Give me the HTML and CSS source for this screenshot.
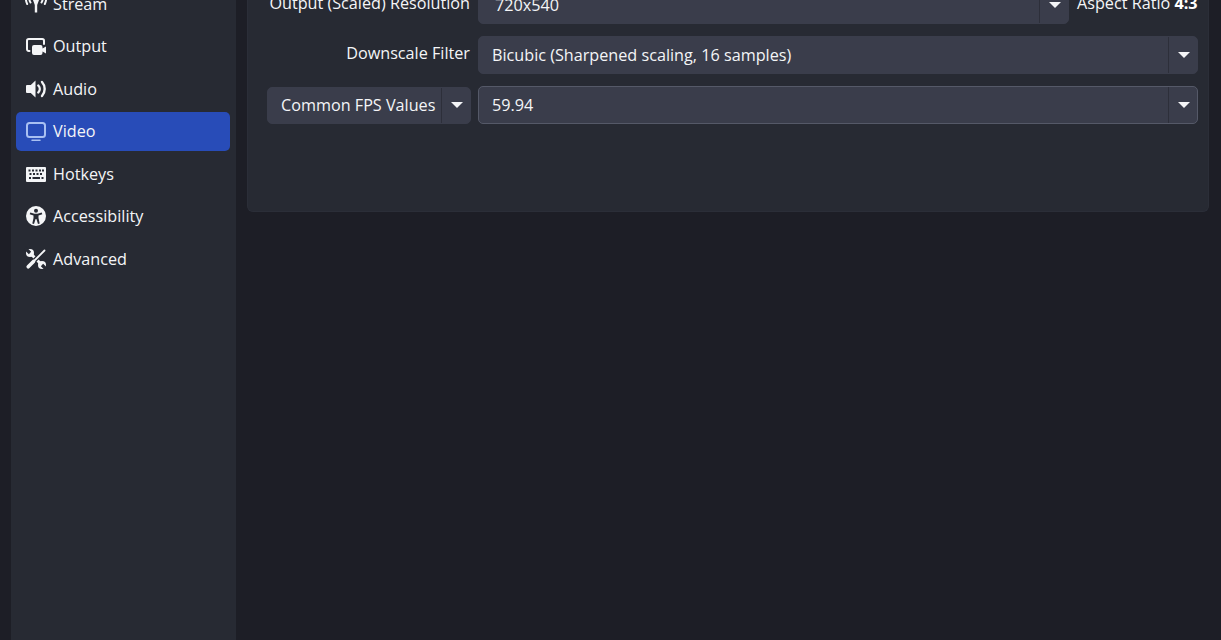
FILE: index.html
```html
<!DOCTYPE html>
<html lang="en">
<head>
<meta charset="utf-8">
<title>Settings</title>
<link rel="stylesheet" href="styles.css">
</head>
<body>
<div class="window">
  <nav class="sidebar">
    <div class="nav-item">
      <svg class="icon" viewBox="0 0 20 20"><path class="fill" d="M6.800 5.500H13.200L11.200 11V18.500H8.800V11Z"/><path class="line" d="M4.500 8.500a6.500 6.500 0 0 1 0-7M15.500 1.500a6.500 6.500 0 0 1 0 7M1.200 10a11 11 0 0 1 0-10M18.800 0a11 11 0 0 1 0 10"/></svg>
      <span>Stream</span>
    </div>
    <div class="nav-item">
      <svg class="icon" viewBox="0 0 20 20"><path class="line" d="M3.500 15H2.800A1.800 1.800 0 0 1 1 13.200V4.800A1.800 1.800 0 0 1 2.800 3H16.200A1.800 1.800 0 0 1 18 4.800V8"/><path class="fill" d="M8 9H14.500A2 2 0 0 1 16.500 11V12.500L20 10.500V17.500L16.500 15.500V17A2 2 0 0 1 14.500 19H8A2 2 0 0 1 6 17V11A2 2 0 0 1 8 9Z"/></svg>
      <span>Output</span>
    </div>
    <div class="nav-item">
      <svg class="icon" viewBox="0 0 20 20"><path class="fill" d="M9.500 1.500V18.500L4.800 14H1A1 1 0 0 1 0 13V7A1 1 0 0 1 1 6H4.800Z"/><path class="line thick" d="M12.300 6.500a5 5 0 0 1 0 7M16 3a10.500 10.500 0 0 1 0 14"/></svg>
      <span>Audio</span>
    </div>
    <div class="nav-item active">
      <svg class="icon" viewBox="0 0 20 20"><rect class="line blue" x="1" y="2" width="18" height="14" rx="2.500"/><path class="line blue thin" d="M6 19.200H14"/></svg>
      <span>Video</span>
    </div>
    <div class="nav-item">
      <svg class="icon" viewBox="0 0 20 20"><path class="fill" fill-rule="evenodd" d="M1 3H19A1 1 0 0 1 20 4V17A1 1 0 0 1 19 18H1A1 1 0 0 1 0 17V4A1 1 0 0 1 1 3ZM2.500 5.500V7.500H4.500V5.500ZM6 5.500V7.500H8V5.500ZM9.500 5.500V7.500H11.500V5.500ZM13 5.500V7.500H15V5.500ZM16 5.500V7.500H18V5.500ZM3.500 9V11H5.500V9ZM7 9V11H9V9ZM10.500 9V11H12.500V9ZM14 9V11H16V9ZM3 13V15H5V13ZM6.500 13V15H14V13ZM15.500 13V15H17.500V13Z"/></svg>
      <span>Hotkeys</span>
    </div>
    <div class="nav-item">
      <svg class="icon" viewBox="0 0 20 20"><path class="fill" fill-rule="evenodd" d="M10 0a10 10 0 1 1 0 20a10 10 0 0 1 0-20ZM10 2.800a2 2 0 1 0 0 4a2 2 0 0 0 0-4ZM4.300 6.500 3.700 8.200 7.500 9.600V12L6.300 17.600 8 18 9.600 13H10.400L12 18 13.700 17.600 12.500 12V9.600L16.300 8.200 15.700 6.500 11.500 7.700H8.500Z"/></svg>
      <span>Accessibility</span>
    </div>
    <div class="nav-item">
      <svg class="icon" viewBox="0 0 20 20"><path class="line wrench" d="M4.500 4.500L15.500 15.500"/><circle class="fill" cx="4" cy="4" r="4"/><circle class="fill" cx="16" cy="16" r="4"/><path class="cut" d="M-1 -1L4 4M21 21L16 16"/><path class="cut halo" d="M15.500 4.500L4.500 15.500"/><path class="line narrow" d="M18.500 1.500L8 12"/><path class="line handle" d="M7.500 12.500L2.200 17.800"/></svg>
      <span>Advanced</span>
    </div>
  </nav>
  <main class="content">
    <section class="panel">
      <div class="row row-first">
        <label class="label">Output (Scaled) Resolution</label>
        <div class="combo combo-narrow">
          <span class="combo-text editable">720x540</span>
          <span class="combo-arrow"><i class="caret"></i></span>
        </div>
        <span class="ratio">Aspect Ratio <b>4:3</b></span>
      </div>
      <div class="row">
        <label class="label">Downscale Filter</label>
        <div class="combo combo-wide">
          <span class="combo-text">Bicubic (Sharpened scaling, 16 samples)</span>
          <span class="combo-arrow"><i class="caret"></i></span>
        </div>
      </div>
      <div class="row">
        <div class="combo fps-type">
          <span class="combo-text">Common FPS Values</span>
          <span class="combo-arrow small"><i class="caret"></i></span>
        </div>
        <div class="combo combo-wide focused">
          <span class="combo-text">59.94</span>
          <span class="combo-arrow"><i class="caret"></i></span>
        </div>
      </div>
    </section>
  </main>
</div>
</body>
</html>
```

FILE: styles.css
```css
* { box-sizing: border-box; }
html, body { margin: 0; height: 100%; }
body {
  background: #1d1e26;
  color: #f4f5f7;
  font-family: "Open Sans", "Noto Sans", sans-serif;
  font-size: 16.2px;
  overflow: hidden;
}
.window {
  display: flex;
  height: 640px;
  padding-left: 11px;
}
.sidebar {
  width: 225px;
  flex: none;
  height: 640px;
  background: #272a33;
  padding: 0 6px 0 5px;
  display: flex;
  flex-direction: column;
  overflow: hidden;
}
.nav-item {
  flex: none;
  height: 39px;
  margin-bottom: 3.5px;
  display: flex;
  align-items: center;
  gap: 7px;
  padding-left: 10px;
  border-radius: 5px;
}
.nav-item:first-child { margin-top: -16px; }
.nav-item.active { background: #284cb8; }
.icon { width: 20px; height: 20px; flex: none; overflow: visible; }
.fill { fill: #f4f5f7; }
.line { fill: none; stroke: #f4f5f7; stroke-width: 2; stroke-linecap: round; }
.line.thick { stroke-width: 2.400; }
.line.blue { stroke: #a9c0f2; }
.line.thin { stroke-width: 1.500; }
.line.wrench { stroke-width: 3; stroke-linecap: butt; }
.line.narrow { stroke-width: 1.800; }
.line.handle { stroke-width: 3.600; }
.cut { fill: none; stroke: #272a33; stroke-width: 3.200; }
.cut.halo { stroke-width: 4.500; }
.content {
  flex: 1;
  padding: 0 12px 0 11px;
}
.panel {
  height: 212px;
  width: 962px;
  background: #272a33;
  border: 1px solid #2b2e38;
  border-top: 0;
  border-radius: 0 0 6px 6px;
  padding: 0 10px 0 19px;
  display: flex;
  flex-direction: column;
  gap: 12px;
}
.row {
  display: flex;
  align-items: center;
  gap: 8px;
  height: 38px;
  flex: none;
}
.row-first { margin-top: -14px; }
.label {
  width: 203px;
  flex: none;
  text-align: right;
  white-space: nowrap;
  position: relative;
  top: -2px;
}
.combo {
  height: 38px;
  display: flex;
  align-items: stretch;
  background: #3a3d4b;
  border: 1px solid #3a3d4b;
  border-radius: 5px;
}
.combo-wide { flex: 1; }
.combo-narrow { width: 591px; }
.fps-type { width: 204px; height: 37px; }
.fps-type + .combo { margin-left: -1px; }
.combo-text {
  flex: 1;
  padding-left: 13px;
  display: flex;
  align-items: center;
  white-space: nowrap;
}
.combo-text.editable { padding-left: 16px; }
.combo-arrow {
  width: 29px;
  flex: none;
  display: flex;
  align-items: center;
  justify-content: center;
  padding-left: 1px;
  border-left: 1px solid #2d2f3a;
}
.caret {
  width: 0;
  height: 0;
  border-left: 6px solid transparent;
  border-right: 6px solid transparent;
  border-top: 6px solid #f4f5f7;
}
.focused { border-color: #555968; }
.ratio { white-space: nowrap; position: relative; top: -2px; }
.ratio b { font-weight: 700; color: #fff; }
```
